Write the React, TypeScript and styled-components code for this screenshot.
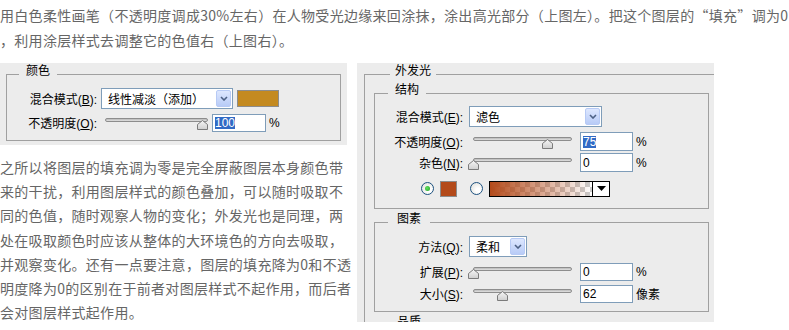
import React from "react";
import styled, { createGlobalStyle } from "styled-components";

const GlobalStyle = createGlobalStyle`
  html, body {
    margin: 0;
    padding: 0;
    background: #fff;
  }
  body {
    width: 789px;
    height: 330px;
    overflow: hidden;
  }
`;

// PAGE TEXT

const Page = styled.div`
  font-family: "Noto Sans CJK SC", sans-serif;
  font-size: 14px;
  letter-spacing: 0.3px;
  color: #666;
`;

const TopText = styled.p`
  margin: 3px 0 10px;
  line-height: 25px;
  white-space: nowrap;
`;

const Columns = styled.div`
  display: flex;
  align-items: flex-start;
  gap: 10px;
`;

const LeftCol = styled.div`
  width: 347px;
  flex-shrink: 0;
`;

const BodyText = styled.p`
  margin: 10px 0 0;
  line-height: 24.2px;
  white-space: nowrap;
`;

// DIALOG

const Panel = styled.div<{ $w: number; $h: number }>`
  width: ${p => p.$w}px;
  height: ${p => p.$h}px;
  flex-shrink: 0;
  background: #ececec;
  overflow: hidden;
  font-family: "Liberation Sans", "Noto Sans CJK SC", sans-serif;
  font-size: 12px;
  letter-spacing: 0;
  color: #000;
`;

const Group = styled.fieldset<{ $pt: number; $pb: number; $pl?: number }>`
  margin: 0;
  padding: ${p => p.$pt}px 0 ${p => p.$pb}px ${p => p.$pl ?? 0}px;
  border: 1px solid #a0a0a0;
  min-inline-size: 0;
  box-sizing: border-box;
`;

const LeftGroup = styled(Group)`
  margin: 2px 6px 4px 6px;
`;

const OuterGroup = styled(Group)`
  margin: 2px 0 0 7px;
  width: 380px;
`;

const InnerGroup = styled(Group)<{ $mt: number }>`
  margin-top: ${p => p.$mt}px;
  width: 335px;
`;

const Legend = styled.legend<{ $ml: number; $px: number }>`
  margin-left: ${p => p.$ml}px;
  padding: 0 ${p => p.$px}px 6px;
  font-size: 12px;
  line-height: 12px;
`;

const Row = styled.div<{ $mt?: number; $indent?: number }>`
  display: flex;
  align-items: center;
  height: 21px;
  margin-top: ${p => p.$mt ?? 0}px;
  padding-left: ${p => p.$indent ?? 0}px;
`;

const Label = styled.label<{ $w: number; $gap: number }>`
  width: ${p => p.$w}px;
  margin-right: ${p => p.$gap}px;
  flex-shrink: 0;
  text-align: right;
  white-space: nowrap;
`;

const Select = styled.div<{ $w: number }>`
  width: ${p => p.$w}px;
  height: 21px;
  box-sizing: border-box;
  border: 1px solid #7f9db9;
  background: #fff;
  display: flex;
  align-items: center;
  padding: 0 1px 0 6px;
`;

const SelectText = styled.span`
  flex: 1;
  white-space: nowrap;
  overflow: hidden;
`;

const DropButton = styled.span`
  width: 15px;
  height: 17px;
  box-sizing: border-box;
  border: 1px solid #b7caf5;
  border-radius: 2px;
  background: linear-gradient(#dde7fe, #b8cbf7);
  display: flex;
  align-items: center;
  justify-content: center;
`;

const Swatch = styled.span<{ $color: string; $w: number; $h: number; $ml: number }>`
  width: ${p => p.$w}px;
  height: ${p => p.$h}px;
  margin-left: ${p => p.$ml}px;
  box-sizing: border-box;
  border: 1px solid #8c8c8c;
  background: ${p => p.$color};
  flex-shrink: 0;
`;

const SliderBox = styled.div<{ $track: number; $after: number }>`
  position: relative;
  width: ${p => p.$track + 4}px;
  height: 9px;
  padding-left: 4px;
  margin-right: ${p => p.$after}px;
  box-sizing: border-box;
  flex-shrink: 0;
`;

const Track = styled.div`
  height: 4px;
  box-sizing: border-box;
  border: 1px solid #8d8d8d;
  border-radius: 2px;
  background: linear-gradient(#b9b9b9, #e2e2e2);
`;

const Thumb = styled.svg`
  position: absolute;
  top: 2px;
`;

const Field = styled.div<{ $w: number; $h: number }>`
  width: ${p => p.$w}px;
  height: ${p => p.$h}px;
  box-sizing: border-box;
  border: 1px solid #7f9db9;
  background: #fff;
  padding-left: 2px;
  display: flex;
  align-items: center;
  flex-shrink: 0;
`;

const Picked = styled.span`
  background: #316ac5;
  color: #fff;
  line-height: 12px;
`;

const Unit = styled.span`
  margin-left: 3px;
  white-space: nowrap;
`;

const Radio = styled.span<{ $on?: boolean; $ml: number }>`
  position: relative;
  width: 13px;
  height: 13px;
  margin-left: ${p => p.$ml}px;
  box-sizing: border-box;
  border: 1px solid #1c5180;
  border-radius: 50%;
  background: radial-gradient(circle at 65% 65%, #fff 20%, #dcdcd6 100%);
  flex-shrink: 0;

  &::after {
    content: "";
    display: ${p => (p.$on ? "block" : "none")};
    position: absolute;
    left: 3px;
    top: 3px;
    width: 5px;
    height: 5px;
    border-radius: 50%;
    background: radial-gradient(circle at 40% 40%, #61e061, #21a121);
  }
`;

const GradientBox = styled.div`
  display: flex;
  width: 121px;
  height: 16px;
  margin-left: 6px;
  box-sizing: border-box;
  border: 1px solid #000;
  flex-shrink: 0;
`;

const GradientFill = styled.div`
  flex: 1;
  background:
    linear-gradient(to right, #b34a1a, rgba(179, 74, 26, 0)),
    repeating-conic-gradient(#cbcbcb 0 25%, #fff 0 50%) 0 0 / 10px 10px;
`;

const GradientDrop = styled.div`
  width: 16px;
  border-left: 1px solid #000;
  background: #fff;
  display: flex;
  align-items: center;
  justify-content: center;
`;

const Chevron = () => (
  <svg width="8" height="5" viewBox="0 0 8 5">
    <path d="M1 1 L4 4 L7 1" fill="none" stroke="#4d6185" strokeWidth="1.6" />
  </svg>
);

const Slider: React.FC<{ track: number; after: number; pos: number }> = ({ track, after, pos }) => (
  <SliderBox $track={track} $after={after}>
    <Track />
    <Thumb width="11" height="10" viewBox="0 0 11 10" style={{ left: 4 + pos * track - 5.5 }}>
      <defs>
        <linearGradient id="thumbFill" x1="0" y1="0" x2="0" y2="1">
          <stop offset="0" stopColor="#f6f6f6" />
          <stop offset="1" stopColor="#cfcfcf" />
        </linearGradient>
      </defs>
      <path d="M5.5 0.5 L10.5 4.5 L10.5 9.5 L0.5 9.5 L0.5 4.5 Z" fill="url(#thumbFill)" stroke="#7b7b7b" />
    </Thumb>
  </SliderBox>
);

export default function App() {
  return (
    <Page lang="zh-CN">
      <GlobalStyle />
      <TopText>
        用白色柔性画笔（不透明度调成30%左右）在人物受光边缘来回涂抹，涂出高光部分（上图左）。把这个图层的“填充”调为0
        <br />
        ，利用涂层样式去调整它的色值右（上图右）。
      </TopText>
      <Columns>
        <LeftCol>
          <Panel $w={347} $h={82}>
            <LeftGroup $pt={5} $pb={7}>
              <Legend $ml={12} $px={7}>颜色</Legend>
              <Row>
                <Label $w={90} $gap={4}>混合模式(<u>B</u>):</Label>
                <Select $w={132}>
                  <SelectText>线性减淡（添加）</SelectText>
                  <DropButton><Chevron /></DropButton>
                </Select>
                <Swatch $color="#c48a20" $w={42} $h={17} $ml={4} />
              </Row>
              <Row $mt={3}>
                <Label $w={90} $gap={4}>不透明度(<u>O</u>):</Label>
                <Slider track={103} after={4} pos={0.95} />
                <Field $w={54} $h={18}><Picked>100</Picked></Field>
                <Unit>%</Unit>
              </Row>
            </LeftGroup>
          </Panel>
          <BodyText>
            之所以将图层的填充调为零是完全屏蔽图层本身颜色带<br />
            来的干扰，利用图层样式的颜色叠加，可以随时吸取不<br />
            同的色值，随时观察人物的变化；外发光也是同理，两<br />
            处在吸取颜色时应该从整体的大环境色的方向去吸取，<br />
            并观察变化。还有一点要注意，图层的填充降为0和不透<br />
            明度降为0的区别在于前者对图层样式不起作用，而后者<br />
            会对图层样式起作用。
          </BodyText>
        </LeftCol>
        <Panel $w={357} $h={259}>
          <OuterGroup $pt={1} $pb={0} $pl={9}>
            <Legend $ml={16} $px={5}>外发光</Legend>
            <InnerGroup $mt={0} $pt={4} $pb={9}>
              <Legend $ml={13} $px={7}>结构</Legend>
              <Row>
                <Label $w={88} $gap={6}>混合模式(<u>E</u>):</Label>
                <Select $w={133}>
                  <SelectText>滤色</SelectText>
                  <DropButton><Chevron /></DropButton>
                </Select>
              </Row>
              <Row $mt={4}>
                <Label $w={88} $gap={6}>不透明度(<u>O</u>):</Label>
                <Slider track={99} after={8} pos={0.757} />
                <Field $w={53} $h={19}><Picked>75</Picked></Field>
                <Unit>%</Unit>
              </Row>
              <Row>
                <Label $w={88} $gap={6}>杂色(<u>N</u>):</Label>
                <Slider track={99} after={8} pos={0} />
                <Field $w={53} $h={19}>0</Field>
                <Unit>%</Unit>
              </Row>
              <Row $mt={5}>
                <Radio $on $ml={46} />
                <Swatch $color="#b34a1a" $w={17} $h={16} $ml={6} />
                <Radio $ml={13} />
                <GradientBox>
                  <GradientFill />
                  <GradientDrop>
                    <svg width="9" height="5" viewBox="0 0 9 5">
                      <path d="M0 0 L9 0 L4.5 5 Z" fill="#000" />
                    </svg>
                  </GradientDrop>
                </GradientBox>
              </Row>
            </InnerGroup>
            <InnerGroup $mt={4} $pt={5} $pb={7}>
              <Legend $ml={13} $px={9}>图素</Legend>
              <Row>
                <Label $w={88} $gap={6}>方法(<u>Q</u>):</Label>
                <Select $w={58}>
                  <SelectText>柔和</SelectText>
                  <DropButton><Chevron /></DropButton>
                </Select>
              </Row>
              <Row $mt={4}>
                <Label $w={88} $gap={6}>扩展(<u>P</u>):</Label>
                <Slider track={99} after={8} pos={0} />
                <Field $w={53} $h={18}>0</Field>
                <Unit>%</Unit>
              </Row>
              <Row $mt={1}>
                <Label $w={88} $gap={6}>大小(<u>S</u>):</Label>
                <Slider track={99} after={8} pos={0.303} />
                <Field $w={53} $h={18}>62</Field>
                <Unit>像素</Unit>
              </Row>
            </InnerGroup>
            <InnerGroup $mt={4} $pt={5} $pb={7}>
              <Legend $ml={13} $px={9}>品质</Legend>
              <Row />
            </InnerGroup>
          </OuterGroup>
        </Panel>
      </Columns>
    </Page>
  );
}
